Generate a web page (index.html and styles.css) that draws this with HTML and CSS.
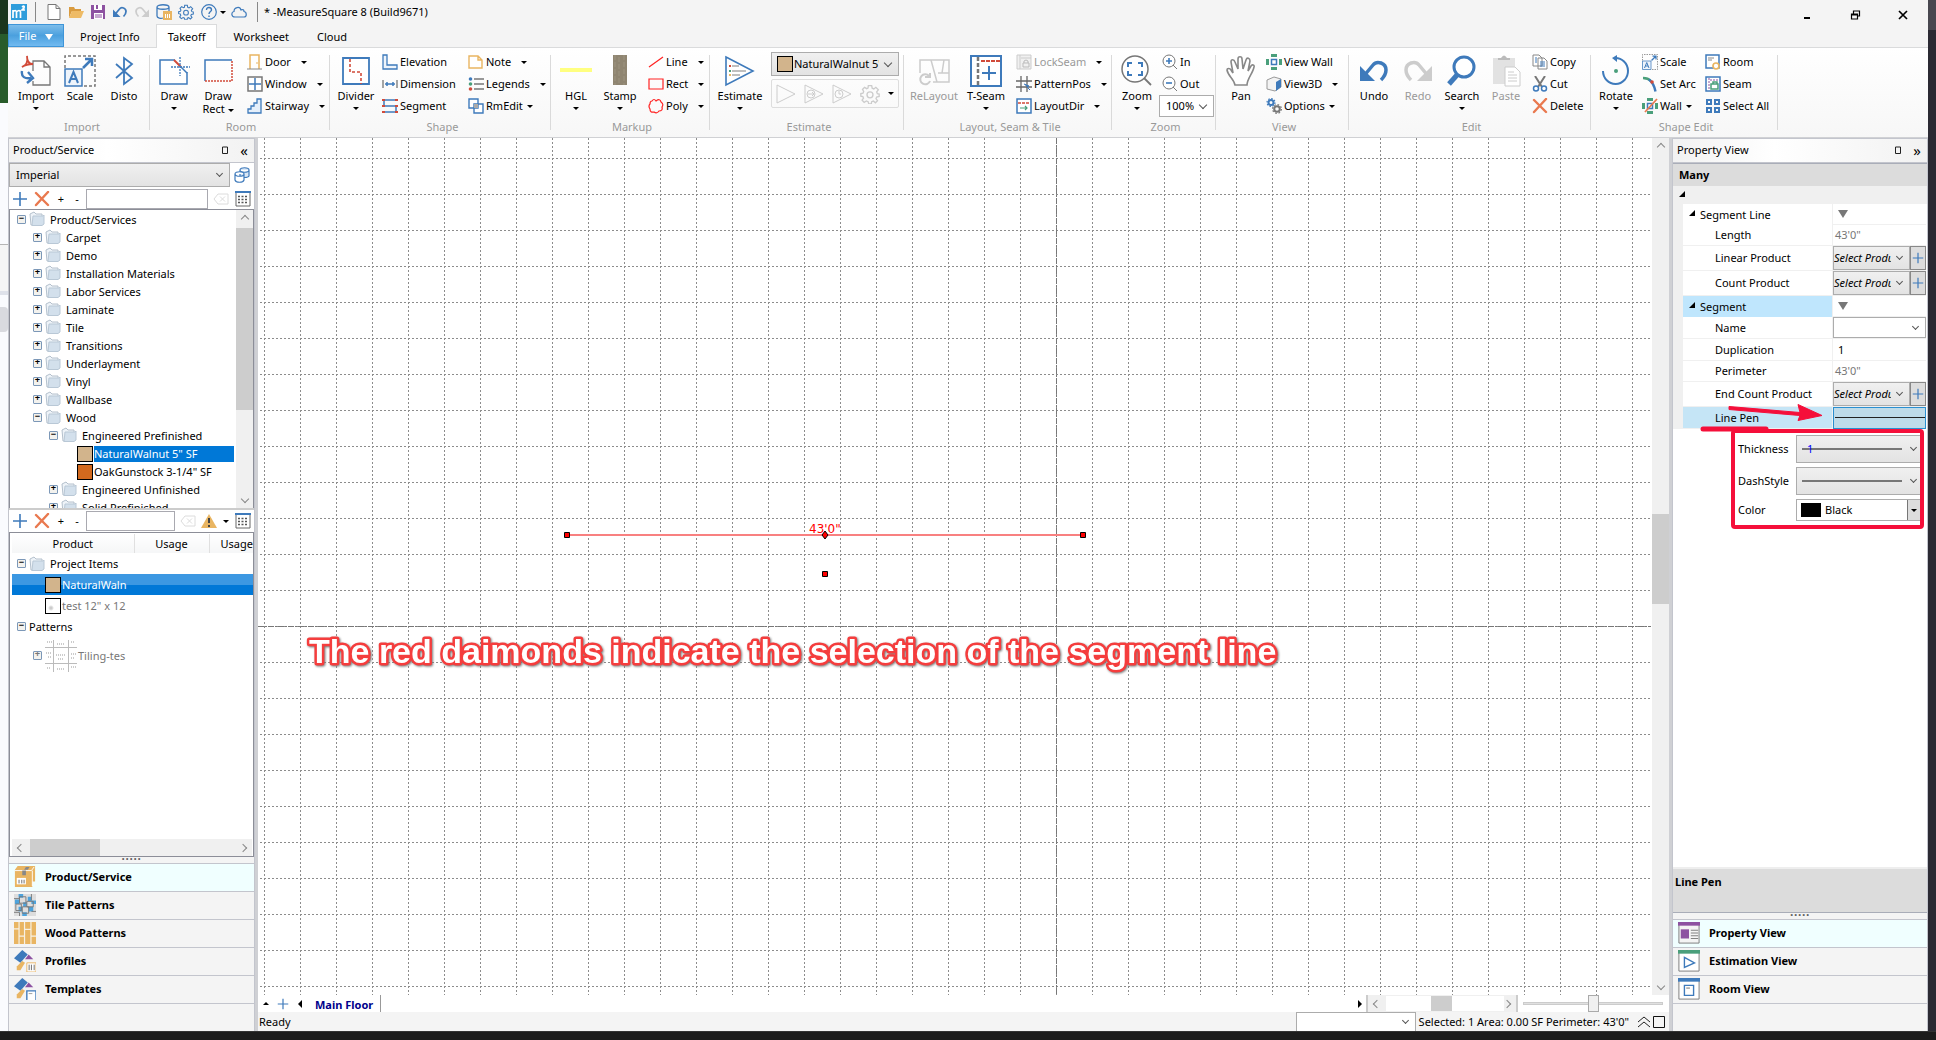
FILE: index.html
```html
<!DOCTYPE html>
<html lang="en">
<head>
  <meta charset="UTF-8">
  <title>MeasureSquare 8</title>
  <link rel="stylesheet" href="styles.css">
</head>
<body>

  <!-- shared icons -->
  <svg class="defs" aria-hidden="true">
    <symbol id="folder" viewBox="0 0 16 16">
      <path d="M1 3l4-2 2 2h6v11H2z" fill="#eef3f8" stroke="#b4c0cc"/>
      <path d="M4 5h10l1-1v9l-2 1.500H3z" fill="#d3e0ec" stroke="#b9c8d6"/>
    </symbol>
    <symbol id="plus" viewBox="0 0 16 16"><path d="M8 1v14M1 8h14" stroke="#3e7abb" stroke-width="1.600"/></symbol>
    <symbol id="cross" viewBox="0 0 16 16"><path d="M2 2l12 12M14 1L2 14" stroke="#e9794f" stroke-width="2.400" stroke-linecap="round"/></symbol>
    <symbol id="grid" viewBox="0 0 16 16">
      <path d="M1 1h14v14H1z" fill="#fff" stroke="#666"/><path d="M0 1h16" stroke="#3e7abb" stroke-width="2"/>
      <path d="M3 5.500h10M3 8.500h10M3 11.500h10" stroke="#555" stroke-width="1.500" stroke-dasharray="2 1.500"/>
    </symbol>
    <symbol id="clear" viewBox="0 0 16 16"><path d="M5 3h10v10H5L1 8zM7 5.500l5 5M12 5.500l-5 5" fill="none" stroke="#dcdcdc"/></symbol>
    <symbol id="scale" viewBox="0 0 32 32">
      <path d="M1 13V1h30v30H20" fill="none" stroke="#777" stroke-width="1.500" stroke-dasharray="3 2"/>
      <path d="M1 14h17v17H1z" fill="#eef4fb" stroke="#3e7abb" stroke-width="1.500"/>
      <path d="M5 28l4.500-11L14 28M7 24h5" fill="none" stroke="#3e7abb" stroke-width="2"/>
      <path d="M19 13l8-8M21 4h7v7" fill="none" stroke="#3e7abb" stroke-width="2.500"/>
    </symbol>
    <symbol id="undo" viewBox="0 0 32 32">
      <path d="M5 22L15 10c4-5 13-2 13 5 0 4-2 7-5 10" fill="none" stroke="currentColor" stroke-width="3.500"/>
      <path d="M2 11v15h15z" fill="currentColor"/>
    </symbol>
    <symbol id="gear" viewBox="0 0 24 24">
      <path d="M10 2h4l.6 3 2 .9L19 4l3 3-2 2.500.8 2L23 12v3l-3 .6-.8 1.900L21 20l-2.500 2.500L16 20.500l-2 .7L13.500 24h-3l-.8-2.800-2-.8L5 22l-2.500-2.500L4.200 17l-.8-2L1 14.500v-3L3.600 11l.8-2L3 6.500 5.500 4 8 5.600l1.600-.7z" fill="none" stroke="currentColor" stroke-width="1.600"/>
      <circle cx="12" cy="13" r="3.600" fill="none" stroke="currentColor" stroke-width="1.600"/>
    </symbol>
    <symbol id="wallview" viewBox="0 0 16 16">
      <path d="M5 0h6v3H5zM5 13h6v3H5zM0 5h3v6H0zM13 5h3v6h-3z" fill="#4a9f7b"/>
      <path d="M5.500 5.500h5v5h-5z" fill="#fff" stroke="#3e7abb" stroke-width="1.500"/>
    </symbol>
    <symbol id="stamps" viewBox="0 0 24 24">
      <path d="M9 0l6 5-8 9-7-5z" fill="#3e7abb"/><path d="M12 10l4-5 5 5z" fill="#8d52a1"/>
      <path d="M9 12l3 2-5 8H3l0-4z" fill="#e9b562"/>
    </symbol>
  </svg>

  <div class="behind"><i class="b1"></i><i class="b2"></i><i class="b3"></i><i class="b4"></i><i class="b5"></i></div>

  <div class="app">

    <header class="titlebar">
      <svg class="i16" viewBox="0 0 16 16"><path d="M0 0h16v16H0z" fill="#2f9ddb"/><path d="M2 14V6M2 8q2.500-3 3.500 0v6M5.500 8q3-3 4 0v6M11 3q3-2 2 1l-2 2h3" fill="none" stroke="#fff" stroke-width="1.700"/></svg>
      <span class="bar"></span>
      <svg class="i16" viewBox="0 0 16 16"><path d="M2 .5h8l4 4v11H2zM10 .5v4h4" fill="#fff" stroke="#777"/></svg>
      <svg class="i16" viewBox="0 0 16 16"><path d="M1 14V3h5l1 2h6v2H4z" fill="#d99b3f"/><path d="M1 14l3-7h12l-3 7z" fill="#eebb66"/></svg>
      <svg class="i16" viewBox="0 0 16 16"><path d="M1 1h14v14H1z" fill="#8d52a1"/><path d="M4 1h8v5H4zM4 9h9v6H4z" fill="#fff"/><path d="M6 1h2v4H6z" fill="#8d52a1"/><path d="M5 11h7M5 13h7" stroke="#8d52a1"/></svg>
      <svg class="i16 blue"><use href="#undo"/></svg>
      <svg class="i16 pale flip"><use href="#undo"/></svg>
      <svg class="i16" viewBox="0 0 16 16"><path d="M1 3v9c0 2 4 3 6 2M1 3c0-3 12-3 12 0v4M1 3c0 3 12 3 12 0" fill="none" stroke="#3e7abb" stroke-width="1.300"/><path d="M7 7h9v9H7z" fill="#e9b562"/><path d="M9.500 10v4M11.500 10v4M13.500 10v4" stroke="#fff"/></svg>
      <svg class="i16 blue"><use href="#gear"/></svg>
      <svg class="i16 help" viewBox="0 0 16 16"><circle cx="8" cy="8" r="7.300" fill="none" stroke="#3e7abb" stroke-width="1.200"/><path d="M5.500 6c0-3.500 5-3.300 5 0 0 1.500-2.500 1.800-2.500 4M8 11.500v1.500" fill="none" stroke="#3e7abb" stroke-width="1.400"/></svg>
      <i class="down"></i>
      <svg class="i16 cloud" viewBox="0 0 16 16"><path d="M4 13c-4 0-4-5-1-5.500C3 3 9 2 10 6c2-1 3 0 3 1.500 3 .5 3 5.500 0 5.500z" fill="none" stroke="#3e7abb" stroke-width="1.200"/></svg>
      <span class="bar"></span>
      <h1>* -MeasureSquare 8 (Build9671)</h1>
      <div class="winbtns">
        <button aria-label="Minimize"><svg class="i12" viewBox="0 0 12 12"><path d="M3 9h6" stroke="#000" stroke-width="2"/></svg></button>
        <button aria-label="Restore"><svg class="i12" viewBox="0 0 12 12"><path d="M2.500 5h6v5h-6zM4.500 5V2h6v5h-2M2.500 6h6" fill="none" stroke="#000" stroke-width="1.200"/></svg></button>
        <button aria-label="Close"><svg class="i12" viewBox="0 0 12 12"><path d="M2 2l8 8M10 2l-8 8" stroke="#000" stroke-width="1.700"/></svg></button>
      </div>
    </header>

    <nav class="tabs">
      <button class="file">File <i class="down white"></i></button>
      <button>Project Info</button>
      <button class="on">Takeoff</button>
      <button>Worksheet</button>
      <button>Cloud</button>
    </nav>

    <div class="ribbon">
      <section class="group g-import">
        <div class="tools">
          <button class="big"><svg viewBox="0 0 32 32"><path d="M13 16V6h11l6 6v18H13v-4M24 6v6h6" fill="none" stroke="#777" stroke-width="1.300"/><path d="M2 12c5-2 6-6 5-11 0 5 2 8 6 8-4 0-8 1-11 3z" fill="none" stroke="#d14b3a" stroke-width="1.800"/><path d="M2 16c-1 6 3 8 9 7M8 17l5 6-6 5" fill="none" stroke="#3e7abb" stroke-width="2.400"/></svg>Import<i class="down"></i></button>
          <button class="big"><svg><use href="#scale"/></svg>Scale</button>
          <button class="big"><svg viewBox="0 0 32 32"><path d="M8 9l16 14-8 6V3l8 6L8 23" fill="none" stroke="#3e7abb" stroke-width="1.800"/></svg>Disto</button>
        </div>
        <h2>Import</h2>
      </section>

      <section class="group g-room">
        <div class="tools">
          <button class="big"><svg viewBox="0 0 32 32"><path d="M17 5H2v24h27V17" fill="#fff" stroke="#3e7abb" stroke-width="1.500"/><path d="M16 5l7 7" stroke="#d14b3a" stroke-width="2"/><path d="M22 11l7 7" stroke="#3e7abb" stroke-width="1.500"/><path d="M22 2v19M13 12h19" stroke="#3e7abb" stroke-width="1.300" stroke-dasharray="2 1"/></svg>Draw<i class="down"></i></button>
          <button class="big"><svg viewBox="0 0 32 32"><path d="M3 26V5h27" fill="none" stroke="#3e7abb" stroke-width="1.500"/><path d="M30 6v20H3" fill="none" stroke="#d14b3a" stroke-width="1.500" stroke-dasharray="2 1"/></svg>Draw<span>Rect <i class="down"></i></span></button>
          <div class="col c7">
            <button class="sm"><svg viewBox="0 0 16 16"><path d="M3 15V1h9v14" fill="#fff" stroke="#e9b562" stroke-width="1.500"/><path d="M0 15h15" stroke="#888"/><path d="M10 8v2" stroke="#e9b562"/></svg>Door<i class="down"></i></button>
            <button class="sm"><svg viewBox="0 0 16 16"><path d="M1 1h14v14H1z" fill="#fff" stroke="#777" stroke-width="1.500"/><path d="M8 2v12M2 8h12" stroke="#3e7abb" stroke-width="1.500"/></svg>Window<i class="down"></i></button>
            <button class="sm"><svg viewBox="0 0 16 16"><path d="M1 15v-4h3V8h3V5h3V1h4v14z" fill="#e5effa" stroke="#3e7abb" stroke-width="1.300"/></svg>Stairway<i class="down"></i></button>
          </div>
        </div>
        <h2>Room</h2>
      </section>

      <section class="group g-shape">
        <div class="tools">
          <button class="big"><svg viewBox="0 0 32 32"><path d="M3 3h26v26H3z" fill="#fff" stroke="#3e7abb" stroke-width="1.800"/><path d="M10 4v13h11v12" fill="none" stroke="#d14b3a" stroke-width="1.600" stroke-dasharray="3 2"/></svg>Divider<i class="down"></i></button>
          <div class="col c4 c-el">
            <button class="sm"><svg viewBox="0 0 16 16"><path d="M1 1h4v10h10v4H1z" fill="#eef4fb" stroke="#3e7abb" stroke-width="1.300"/></svg>Elevation</button>
            <button class="sm"><svg viewBox="0 0 16 16"><path d="M1 4v8M15 4v8" stroke="#777" stroke-width="1.300"/><path d="M3 8h10M5 6v4M11 6v4" stroke="#3e7abb" stroke-width="1.500"/></svg>Dimension</button>
            <button class="sm"><svg viewBox="0 0 16 16"><path d="M1 2h14M1 14h14M2 2v6h12v6" fill="none" stroke="#3e7abb" stroke-width="1.500"/><path d="M0 2h3M13 2h3M0 8h3M13 8h3M0 14h3M13 14h3" stroke="#d14b3a" stroke-width="2"/></svg>Segment</button>
          </div>
          <div class="col">
            <button class="sm"><svg viewBox="0 0 16 16"><path d="M1 2h9l4 4v8H1zM10 2v4h4" fill="#fff" stroke="#e9b562" stroke-width="1.400"/></svg>Note<i class="down"></i></button>
            <button class="sm"><svg viewBox="0 0 16 16"><path d="M6 3h10M6 8h10M6 13h10" stroke="#777" stroke-width="1.500"/><circle cx="2.500" cy="3" r="1.800" fill="#3e7abb"/><circle cx="2.500" cy="8" r="1.800" fill="#4a9f7b"/><circle cx="2.500" cy="13" r="1.800" fill="#d14b3a"/></svg>Legends<i class="down"></i></button>
            <button class="sm tight"><svg viewBox="0 0 16 16"><path d="M1 1h9v9H1zM6 6h9v9H6z" fill="#fff" stroke="#3e7abb" stroke-width="1.400"/><path d="M6 6h4v4H6z" fill="#aaa"/></svg>RmEdit<i class="down"></i></button>
          </div>
        </div>
        <h2>Shape</h2>
      </section>

      <section class="group g-markup">
        <div class="tools">
          <button class="big"><svg viewBox="0 0 32 32"><path d="M0 15h32" stroke="#ffff80" stroke-width="4"/></svg>HGL<i class="down"></i></button>
          <button class="big"><svg viewBox="0 0 32 32"><path d="M9 0h14v30H9z" fill="#8f8571"/><path d="M11 0v30M15 2v26M20 0v30" stroke="#9d9481" stroke-dasharray="5 2"/></svg>Stamp<i class="down"></i></button>
          <div class="col c6">
            <button class="sm"><svg viewBox="0 0 16 16"><path d="M1 13L15 3" stroke="#f22" stroke-width="1.200"/></svg>Line<i class="down"></i></button>
            <button class="sm"><svg viewBox="0 0 16 16"><path d="M1 3h14v10H1z" fill="none" stroke="#f22" stroke-width="1.200"/></svg>Rect<i class="down"></i></button>
            <button class="sm"><svg viewBox="0 0 16 16"><path d="M4 3q2-3 4 0 4-3 5 1 3 2 1 5 1 4-3 4-2 3-5 1-4 1-4-3-2-3 0-5 0-3 2-3z" fill="none" stroke="#f22" stroke-width="1.200"/></svg>Poly<i class="down"></i></button>
          </div>
        </div>
        <h2>Markup</h2>
      </section>

      <section class="group g-estimate">
        <div class="tools">
          <button class="big wide"><svg viewBox="0 0 32 32"><path d="M2 2l27 14L2 30z" fill="#fff" stroke="#3e7abb" stroke-width="1.600"/><path d="M8 11h7M8 16h14M8 20h8" stroke="#aaa" stroke-width="1.500"/><path d="M5 11h2" stroke="#d14b3a" stroke-width="2"/><path d="M5 16h2" stroke="#4a9f7b" stroke-width="2"/><path d="M5 20h2" stroke="#e9b562" stroke-width="2"/></svg>Estimate<i class="down"></i></button>
          <div class="est">
            <button class="combo product"><span class="swatch tan"></span><span class="clip">NaturalWalnut 5" SF</span></button>
            <div class="runs">
              <svg viewBox="0 0 20 20"><path d="M1 1l18 9L1 19z"/></svg>
              <svg viewBox="0 0 20 20"><path d="M1 1l18 9L1 19z"/><circle cx="7" cy="10" r="4"/><path d="M4 10h6M8 8l2 2-2 2"/></svg>
              <svg viewBox="0 0 20 20"><path d="M1 1l18 9L1 19z"/><circle cx="7" cy="10" r="4"/><path d="M7 7v3h2"/></svg>
              <svg class="palest"><use href="#gear"/></svg>
              <i class="down"></i>
            </div>
          </div>
        </div>
        <h2>Estimate</h2>
      </section>

      <section class="group g-layout">
        <div class="tools">
          <button class="big wide off"><svg viewBox="0 0 32 32"><path d="M2 18V5h29v22H15M13 5l6 22M20 18h11M26 5l-2 13" fill="none" stroke="#ccc" stroke-width="1.500"/><path d="M11 21a5 5 0 1 0 1 5M7 22h5v-4" fill="none" stroke="#ccc" stroke-width="2"/></svg>ReLayout</button>
          <button class="big wide"><svg viewBox="0 0 32 32"><path d="M1 1h30v30H1z" fill="#fff" stroke="#3e7abb" stroke-width="2"/><path d="M8 2v28" stroke="#777" stroke-width="2.500" stroke-dasharray="4 2"/><path d="M11 6h19" stroke="#d14b3a" stroke-width="2" stroke-dasharray="4 1"/><path d="M19 11v14M12 18h14" stroke="#3e7abb" stroke-width="2"/></svg>T-Seam<i class="down"></i></button>
          <div class="col c4">
            <button class="sm off"><svg viewBox="0 0 16 16"><path d="M1 1h14v14H1zM4 1v14M5 4h10" fill="#f0f0f0" stroke="#ccc"/><path d="M7 9h6v4H7zM8 9V7q2-2 4 0v2" fill="none" stroke="#bbb"/></svg>LockSeam<i class="down"></i></button>
            <button class="sm"><svg viewBox="0 0 16 16"><path d="M5 0v16M11 0v16M0 5h16M0 11h16" stroke="#666" stroke-width="1.300"/><path d="M8 8l5 2-2 1 3 3" stroke="#3e7abb" fill="#3e7abb"/></svg>PatternPos<i class="down"></i></button>
            <button class="sm"><svg viewBox="0 0 16 16"><path d="M1 1h14v14H1z" fill="#fff" stroke="#3e7abb" stroke-width="1.500"/><path d="M2 5h12" stroke="#d14b3a" stroke-width="1.500" stroke-dasharray="3 1"/><path d="M4 10h7M9 8l2 2-2 2" fill="none" stroke="#4a9f7b" stroke-width="1.200"/></svg>LayoutDir<i class="down"></i></button>
          </div>
        </div>
        <h2>Layout, Seam &amp; Tile</h2>
      </section>

      <section class="group g-zoom">
        <div class="tools">
          <button class="big"><svg viewBox="0 0 32 32"><circle cx="14" cy="14" r="13" fill="#fff" stroke="#777" stroke-width="1.500"/><path d="M23 23l7 7" stroke="#777" stroke-width="1.800"/><path d="M7 12V8h4M17 8h4v4M21 16v4h-4M11 20H7v-4" fill="none" stroke="#3e7abb" stroke-width="2"/></svg>Zoom<i class="down"></i></button>
          <div class="col">
            <button class="sm in3"><svg viewBox="0 0 16 16"><circle cx="7" cy="7" r="6" fill="#fff" stroke="#777"/><path d="M11 11l4 4" stroke="#777"/><path d="M7 4v6M4 7h6" stroke="#3e7abb" stroke-width="1.600"/></svg>In</button>
            <button class="sm in3"><svg viewBox="0 0 16 16"><circle cx="7" cy="7" r="6" fill="#fff" stroke="#777"/><path d="M11 11l4 4" stroke="#777"/><path d="M4 7h6" stroke="#3e7abb" stroke-width="1.600"/></svg>Out</button>
            <span class="combo plain zoomsel"><select aria-label="Zoom level"><option>100%</option></select></span>
          </div>
        </div>
        <h2>Zoom</h2>
      </section>

      <section class="group g-view">
        <div class="tools">
          <button class="big"><svg viewBox="0 0 32 32"><path d="M10 30c-1-6-7-9-8-15 0-2 3-2 4 0l2 3L6 7c0-3 3-3 4 0l3 7V4c0-3 4-3 4 0l1 10 3-9c1-3 4-2 4 1l-2 10 3-5c1-2 4-1 3 1-1 6-7 12-7 18z" fill="#fff" stroke="#888" stroke-width="1.600"/></svg>Pan</button>
          <div class="col c3">
            <button class="sm"><svg><use href="#wallview"/></svg>View Wall</button>
            <button class="sm"><svg viewBox="0 0 16 16"><path d="M1 4l7-3 7 2v8l-6 4-8-2z" fill="#f3f3f3" stroke="#999"/><path d="M10 6l5-3v8l-5 4z" fill="#3e7abb"/></svg>View3D<i class="down"></i></button>
            <button class="sm tight"><svg viewBox="0 0 16 16"><circle cx="5" cy="4.500" r="2.500" fill="none" stroke="#3e7abb" stroke-width="2"/><circle cx="5" cy="4.500" r="4" fill="none" stroke="#3e7abb" stroke-width="1.200" stroke-dasharray="1.500 1.600"/><circle cx="11" cy="11" r="2.800" fill="none" stroke="#777" stroke-width="2"/><circle cx="11" cy="11" r="4.400" fill="none" stroke="#777" stroke-width="1.200" stroke-dasharray="1.700 1.750"/></svg>Options<i class="down"></i></button>
          </div>
        </div>
        <h2>View</h2>
      </section>

      <section class="group g-edit">
        <div class="tools">
          <button class="big blue"><svg><use href="#undo"/></svg><b>Undo</b></button>
          <button class="big pale"><svg class="flip"><use href="#undo"/></svg><b class="off">Redo</b></button>
          <button class="big"><svg viewBox="0 0 32 32"><circle cx="18" cy="12" r="10" fill="#fff" stroke="#3e7abb" stroke-width="3"/><path d="M11 20l-8 9" stroke="#3e7abb" stroke-width="5"/></svg>Search<i class="down"></i></button>
          <button class="big off"><svg viewBox="0 0 32 32"><path d="M3 3h22v26H3z" fill="#e2e2e2"/><path d="M8 5V3h3q3-5 6 0h3v2z" fill="#bbb"/><path d="M15 12h10l5 5v14H15z" fill="#fff" stroke="#ccc"/><path d="M18 17h6M18 20h9M18 23h9M18 26h9" stroke="#ccc"/></svg>Paste</button>
          <div class="col c4">
            <button class="sm"><svg viewBox="0 0 16 16"><path d="M1 1h6l3 3v8H1zM6 4h6l3 3v8H6z" fill="#fff" stroke="#888"/><path d="M8 8h5M8 10h5M8 12h5M3 4h2M3 6h2M3 8h2" stroke="#3e7abb"/></svg>Copy</button>
            <button class="sm"><svg viewBox="0 0 16 16"><path d="M3 0l7 11M13 0L6 11" stroke="#777" stroke-width="2"/><circle cx="4" cy="12.500" r="2.500" fill="none" stroke="#3e7abb" stroke-width="1.500"/><circle cx="12" cy="12.500" r="2.500" fill="none" stroke="#3e7abb" stroke-width="1.500"/></svg>Cut</button>
            <button class="sm"><svg><use href="#cross"/></svg>Delete</button>
          </div>
        </div>
        <h2>Edit</h2>
      </section>

      <section class="group g-shapeedit">
        <div class="tools">
          <button class="big"><svg viewBox="0 0 32 32"><path d="M3 16a12.500 13 0 1 0 12-13" fill="none" stroke="#3e7abb" stroke-width="2"/><path d="M17 0v7l-5-4z" fill="#3e7abb"/><circle cx="16" cy="16" r="2" fill="#4a9f7b"/></svg>Rotate<i class="down"></i></button>
          <div class="col c4 c-sc">
            <button class="sm"><svg><use href="#scale"/></svg>Scale</button>
            <button class="sm"><svg viewBox="0 0 16 16"><path d="M1 2q5 0 8 3" fill="none" stroke="#4a9f7b" stroke-width="2.400"/><path d="M7 3.500q5 4 6.500 12" fill="none" stroke="#3e7abb" stroke-width="2.400"/><circle cx="10" cy="6" r="1.800" fill="#d14b3a"/></svg>Set Arc</button>
            <button class="sm tight"><svg viewBox="0 0 16 16"><use href="#wallview" width="16" height="16"/><path d="M3 14L15 1" stroke="#e9794f" stroke-width="1.800"/></svg>Wall<i class="down"></i></button>
          </div>
          <div class="col">
            <button class="sm"><svg viewBox="0 0 16 16"><path d="M1 1h13v13H1z" fill="#fff" stroke="#3e7abb" stroke-width="1.500"/><path d="M3 4h6M3 6h4" stroke="#888"/><circle cx="11" cy="12" r="3" fill="#fff" stroke="#e9b562" stroke-width="1.700"/></svg>Room</button>
            <button class="sm"><svg viewBox="0 0 16 16"><path d="M1 1h14v14H1z" fill="#fff" stroke="#3e7abb" stroke-width="1.500"/><path d="M4 2v12M5 4h9" stroke="#8d52a1" stroke-dasharray="2 1"/><path d="M6 8h7v5H6zM8 8V6h4v2" fill="none" stroke="#4a9f7b" stroke-width="1.500"/></svg>Seam</button>
            <button class="sm"><svg viewBox="0 0 16 16"><path d="M2 2h4v4H2zM10 2h4v4h-4zM2 10h4v4H2zM10 10h4v4h-4z" fill="none" stroke="#3e7abb" stroke-width="2"/></svg>Select All</button>
          </div>
        </div>
        <h2>Shape Edit</h2>
      </section>
    </div>

    <main>
      <aside class="left">
        <div class="panelhead">Product/Service <svg class="i12" viewBox="0 0 12 12"><path d="M3.500 3h5v6.500h-5z" fill="none" stroke="#222"/></svg><span class="chev">«</span></div>
        <div class="unitrow">
          <span class="combo units"><select aria-label="Units"><option>Imperial</option></select></span>
          <svg class="i16" viewBox="0 0 16 16"><path d="M6 3v6c1 2 8 2 9 0V3M6 3c0-3 9-3 9 0s-9 3-9 0" fill="#dbe8f6" stroke="#3e7abb" stroke-width="1.200"/><path d="M1 7v6c1 3 8 3 9 0V7M1 7c0-3 9-3 9 0s-9 3-9 0" fill="#fff" stroke="#3e7abb" stroke-width="1.200"/></svg>
        </div>
        <div class="toolrow">
          <svg class="i16"><use href="#plus"/></svg>
          <svg class="i16 x"><use href="#cross"/></svg>
          <span class="pm">+</span><span class="pm">-</span>
          <input type="text" aria-label="Filter products">
          <svg class="i16"><use href="#clear"/></svg>
          <svg class="i16 last"><use href="#grid"/></svg>
        </div>
        <div class="treebox">
          <ul class="tree">
            <li><span class="exp">−</span><svg><use href="#folder"/></svg>Product/Services
              <ul>
                <li><span class="exp">+</span><svg><use href="#folder"/></svg>Carpet</li>
                <li><span class="exp">+</span><svg><use href="#folder"/></svg>Demo</li>
                <li><span class="exp">+</span><svg><use href="#folder"/></svg>Installation Materials</li>
                <li><span class="exp">+</span><svg><use href="#folder"/></svg>Labor Services</li>
                <li><span class="exp">+</span><svg><use href="#folder"/></svg>Laminate</li>
                <li><span class="exp">+</span><svg><use href="#folder"/></svg>Tile</li>
                <li><span class="exp">+</span><svg><use href="#folder"/></svg>Transitions</li>
                <li><span class="exp">+</span><svg><use href="#folder"/></svg>Underlayment</li>
                <li><span class="exp">+</span><svg><use href="#folder"/></svg>Vinyl</li>
                <li><span class="exp">+</span><svg><use href="#folder"/></svg>Wallbase</li>
                <li><span class="exp">−</span><svg><use href="#folder"/></svg>Wood
                  <ul>
                    <li><span class="exp">−</span><svg><use href="#folder"/></svg>Engineered Prefinished
                      <ul class="leaf">
                        <li class="row"><span class="swatch tan"></span><span class="sel">NaturalWalnut 5" SF</span></li>
                        <li class="row"><span class="swatch oak"></span>OakGunstock 3-1/4" SF</li>
                      </ul>
                    </li>
                    <li><span class="exp">+</span><svg><use href="#folder"/></svg>Engineered Unfinished</li>
                    <li><span class="exp">+</span><svg><use href="#folder"/></svg>Solid Prefinished</li>
                  </ul>
                </li>
              </ul>
            </li>
          </ul>
          <div class="vbar"><i class="arr up"></i><span class="thumb treethumb"></span><i class="arr dn"></i></div>
        </div>
        <div class="toolrow second">
          <svg class="i16"><use href="#plus"/></svg>
          <svg class="i16 x"><use href="#cross"/></svg>
          <span class="pm">+</span><span class="pm">-</span>
          <input type="text" aria-label="Filter project items">
          <svg class="i16"><use href="#clear"/></svg>
          <svg class="i16" viewBox="0 0 16 16"><path d="M8 1l8 14H0z" fill="#e9b562"/><path d="M8 5v5M8 12v2" stroke="#444" stroke-width="2"/></svg>
          <i class="down"></i>
          <svg class="i16 last"><use href="#grid"/></svg>
        </div>
        <div class="itembox">
          <table>
            <thead><tr><th class="c1">Product</th><th class="c2">Usage</th><th>Usage</th></tr></thead>
            <tbody>
              <tr><td colspan="3"><div class="cell"><span class="exp">−</span><svg><use href="#folder"/></svg>Project Items</div></td></tr>
              <tr class="picked"><td colspan="3"><div class="cell d2"><span class="swatch tan"></span>NaturalWaln</div></td></tr>
              <tr class="dim"><td colspan="3"><div class="cell d2"><span class="swatch speck"></span>test 12" x 12</div></td></tr>
              <tr><td colspan="3"><div class="cell bare"><span class="exp">−</span>Patterns</div></td></tr>
              <tr class="dim tall"><td colspan="3"><div class="cell d1"><span class="exp">+</span><svg class="tiling" viewBox="0 0 32 32"><path d="M0 7.500h32M0 23.500h32M8.500 0v32M23.500 0v32" stroke="#bbb"/><path d="M2 2h5M12 4h8M26 2h4M1 13h6M11 15h9M26 14h5M2 28h4M12 29h7M26 27h5M3 17h4M13 19h6M26 18h4" stroke="#ccc" stroke-width="2" stroke-dasharray="1 1"/></svg>Tiling-tes</div></td></tr>
            </tbody>
          </table>
          <div class="hbar"><i class="arr lf"></i><span class="thumb itemthumb"></span><i class="arr rt"></i></div>
        </div>
        <div class="grip">·····</div>
        <nav class="stack">
          <a href="#" class="on"><svg viewBox="0 0 24 24"><path d="M4 0h19v17h-3v6H1V4z" fill="#e9b562"/><path d="M1 5h18l3-4M20 5v17" fill="none" stroke="#fff"/><path d="M9 5h4v5H9zM13 1h4l-2 3h-4z" fill="#888"/><path d="M3 13h10v7H3z" fill="#fff"/><path d="M5.500 15v4M8.500 15v4M11 15v4" stroke="#666"/></svg>Product/Service</a>
          <a href="#"><svg viewBox="0 0 24 24"><path d="M0 0h24v24H0z" fill="#ddd"/><path d="M5 0h5v4H5zM15 3h4v5h-4zM1 6h5v5H1zM10 9h4v5h-4zM19 7h5v4h-5zM5 14h4v5H5zM16 14h5v5h-5zM9 20h5v4H9z" fill="#4da3dc"/><path d="M6 3h7v7H6zM14 8h7v6h-7zM9 14h7v7H9zM2 11h6v7H2zM19 0v7M0 5h6M0 20h6v4M19 19h5" fill="none" stroke="#777"/></svg>Tile Patterns</a>
          <a href="#"><svg viewBox="0 0 24 24"><path d="M0 0h24v24H0z" fill="#e9b562"/><path d="M5.500 0v24M11.500 0v24M18.500 0v24M0 7.500h5M12 8h6M6 15.500h5M19 15.500h5" stroke="#f7f1e4" stroke-width="1.300"/></svg>Wood Patterns</a>
          <a href="#"><svg viewBox="0 0 24 24"><use href="#stamps" width="24" height="24"/><path d="M14 14h10v10H14z" fill="#fff" stroke="#e9b562"/><path d="M16.500 16v6M19 16v6M22 16v6" stroke="#666"/></svg>Profiles</a>
          <a href="#"><svg viewBox="0 0 24 24"><use href="#stamps" width="24" height="24"/><path d="M14 24V14h10v10" fill="#fff" stroke="#3e7abb" stroke-width="1.500"/><path d="M16 17h4" stroke="#999"/></svg>Templates</a>
        </nav>
      </aside>

      <section class="center">
        <div class="work">
          <svg class="canvas">
            <defs>
              <pattern id="dots" x="6" y="20" width="36" height="36" patternUnits="userSpaceOnUse">
                <path d="M.5 0v36M0 .5h36" stroke="#8c8c8c" stroke-dasharray="2 2"/>
              </pattern>
            </defs>
            <rect width="100%" height="100%" fill="url(#dots)"/>
            <path d="M798.500 0v856M0 488.500h1393" stroke="#777" stroke-dasharray="6 1 2 1"/>
            <path d="M309 397h516" stroke="#f88080" stroke-width="2"/>
            <text class="dim" x="551" y="395">43'0"</text>
            <g fill="#f00" stroke="#000">
              <path d="M306.500 394.500h5v5h-5zM822.500 394.500h5v5h-5zM564.500 433.500h5v5h-5zM567 393l3 4-3 4-3-4z"/>
            </g>
            <text class="callout" x="51" y="525">The red daimonds indicate the selection of the segment line</text>
          </svg>
          <div class="vbar tallbar"><i class="arr up"></i><span class="thumb canvasthumb"></span><i class="arr dn"></i></div>
        </div>
        <div class="floors">
          <i class="upt"></i>
          <svg class="i12"><use href="#plus"/></svg>
          <i class="leftt"></i>
          <button class="floor">Main Floor</button>
          <i class="rightt"></i>
          <div class="hbar floorbar"><i class="arr lf"></i><span class="track"><span class="thumb"></span></span><i class="arr rt"></i></div>
          <input type="range" aria-label="Zoom" min="0" max="100" value="50">
        </div>
        <footer>
          <span>Ready</span>
          <span class="combo plain layer"><select aria-label="Layer"><option></option></select></span>
          <span class="sum">Selected: 1 Area: 0.00 SF Perimeter: 43'0"</span>
          <svg class="i12" viewBox="0 0 12 12"><path d="M0 6l6-5 6 5M0 11l6-5 6 5" fill="none" stroke="#222"/></svg>
          <svg class="i12" viewBox="0 0 12 12"><path d="M.5 .5h11v11H.5z" fill="none" stroke="#111"/></svg>
        </footer>
      </section>

      <aside class="right">
        <div class="panelhead">Property View <svg class="i12" viewBox="0 0 12 12"><path d="M3.500 3h5v6.500h-5z" fill="none" stroke="#222"/></svg><span class="chev">»</span></div>
        <div class="props">
          <h3>Many</h3>
          <div class="root"><i class="tri"></i></div>
          <div class="rows">
            <div class="prow head"><span><i class="tri"></i>Segment Line</span><div><i class="filter"></i></div></div>
            <div class="prow"><span>Length</span><div class="ro">43'0"</div></div>
            <div class="prow pick"><label for="lp">Linear Product</label><div><span class="combo"><select id="lp"><option>Select Product</option></select></span><button class="add" aria-label="Add linear product"><svg class="i12"><use href="#plus"/></svg></button></div></div>
            <div class="prow pick"><label for="cp">Count Product</label><div><span class="combo"><select id="cp"><option>Select Product</option></select></span><button class="add" aria-label="Add count product"><svg class="i12"><use href="#plus"/></svg></button></div></div>
            <div class="prow head hot"><span><i class="tri"></i>Segment</span><div><i class="filter"></i></div></div>
            <div class="prow mid"><label for="nm">Name</label><div><span class="combo plain"><select id="nm"><option></option></select></span></div></div>
            <div class="prow mid"><label for="dup">Duplication</label><div><input id="dup" type="text" value="1"></div></div>
            <div class="prow"><span>Perimeter</span><div class="ro">43'0"</div></div>
            <div class="prow pick"><label for="ec">End Count Product</label><div><span class="combo"><select id="ec"><option>Select Product</option></select></span><button class="add" aria-label="Add end count product"><svg class="i12"><use href="#plus"/></svg></button></div></div>
            <div class="prow mid pen"><span>Line Pen</span><div class="penbox"><i></i></div></div>

            <div class="popup">
              <label for="th">Thickness</label><button id="th" class="combo line"><i></i><em>1</em></button>
              <label for="ds">DashStyle</label><button id="ds" class="combo line"><i></i></button>
              <label for="co">Color</label><button id="co" class="combo color"><b class="black"></b>Black<span><i class="down"></i></span></button>
            </div>
            <svg class="marks" viewBox="0 0 130 36"><path d="M3 28h63" stroke="#f50f3a" stroke-width="5" stroke-linecap="round"/><path d="M29 5.500l71 6-2-8 24 11-24 5 2-5-71-6z" fill="#f50f3a" stroke="#f50f3a"/></svg>
          </div>
          <div class="desc">Line Pen</div>
        </div>
        <div class="grip">·····</div>
        <nav class="stack">
          <a href="#" class="on"><svg viewBox="0 0 24 24"><path d="M1 1h22v22H1z" fill="#f4f4f4" stroke="#777"/><path d="M0 0h24v4H0z" fill="#8d52a1"/><path d="M3 8h9v10H3z" fill="#8d52a1"/><path d="M14 9h8M14 12h8M14 15h8M14 18h8" stroke="#777"/></svg>Property View</a>
          <a href="#"><svg viewBox="0 0 24 24"><path d="M1 1h22v22H1z" fill="#fff" stroke="#777"/><path d="M0 0h24v4H0z" fill="#4a9f7b"/><path d="M7 8l11 6-11 5z" fill="none" stroke="#3e7abb" stroke-width="1.500"/></svg>Estimation View</a>
          <a href="#"><svg viewBox="0 0 24 24"><path d="M1 1h22v22H1z" fill="#fff" stroke="#777"/><path d="M0 0h24v4H0z" fill="#3e7abb"/><path d="M7 8h10v11H7z" fill="none" stroke="#3e7abb" stroke-width="1.500"/><path d="M9 11h4" stroke="#999" stroke-width="1.500"/></svg>Room View</a>
        </nav>
      </aside>
    </main>
  </div>

</body>
</html>
```
FILE: styles.css
```css
* {
  box-sizing: border-box;
}

body {
  margin: 0;
  height: 100vh;
  padding: 0 8px 8px;
  display: flex;
  position: relative;
  overflow: hidden;
  background: linear-gradient(#48474f 30px, #2b2a33 30px);
  font-family: "Noto Sans", "Open Sans", sans-serif;
  font-size: 11px;
  line-height: 14px;
  color: #000;
}

body::after {
  content: "";
  position: absolute;
  left: 0;
  right: 0;
  bottom: 0;
  height: 8px;
  background: #1c1c1c;
  border-top: 1px solid #333;
}

button, input, select {
  font: inherit;
  color: inherit;
  margin: 0;
}

button {
  border: 0;
  padding: 0;
  background: none;
}

h1, h2, h3, ul {
  margin: 0;
  padding: 0;
  font: inherit;
  list-style: none;
}

.defs {
  position: absolute;
  width: 0;
  height: 0;
}

.i16 { width: 16px; height: 16px; flex: none; }
.i12 { width: 12px; height: 12px; flex: none; }
.blue { color: #3e7abb; }
.pale { color: #ccc; }
.flip { transform: scaleX(-1); }

/* window that shows behind on the left */
.behind {
  position: absolute;
  left: 0;
  top: 0;
  bottom: 0;
  width: 8px;
  display: flex;
  flex-direction: column;
  background: #fafbfe;
}

.b1 { height: 34px; background: #1b361d; }
.b2 { height: 69px; background: #285c2b; }
.b3 { height: 142px; border-bottom: 1px solid #b5b5b5; }
.b4 { height: 50px; background: #f5f5f5; border-bottom: 4px solid #dfe2ea; }
.b5 { height: 25px; margin-top: 12px; background: #d9dadf; border-radius: 0 4px 4px 0; }

.app {
  flex: 1;
  min-width: 0;
  position: relative;
  display: flex;
  flex-direction: column;
  background: #f4f4f4;
}

.down {
  display: inline-block;
  border: 3px solid transparent;
  border-top-color: #000;
  border-bottom: 0;
}

.down.white {
  border-width: 6px 4px 0;
  border-top-color: #fff;
  margin-left: 6px;
}

/* title bar and tabs */
.titlebar {
  height: 24px;
  display: flex;
  align-items: center;
  gap: 6px;
  padding-left: 3px;
}

.titlebar .bar {
  width: 1px;
  height: 20px;
  margin: 0 4px 0 2px;
  background: #888;
}

.titlebar .help { margin-left: 1px; }
.titlebar .down { margin: 0 -1px 0 -3px; }
.titlebar .cloud + .bar { margin: 0 0 0 4px; }

.winbtns {
  margin-left: auto;
  display: flex;
  gap: 36px;
  padding: 6px 19px 0 0;
}

.winbtns button { height: 12px; }

.tabs {
  height: 24px;
  display: flex;
  gap: 4px;
  border-bottom: 1px solid #dadbdc;
}

.tabs button {
  height: 24px;
  padding: 0 11px;
  border: 1px solid transparent;
  border-bottom: 0;
}

.tabs .on {
  background: #fff;
  border-color: #dadbdc;
}

.tabs .file {
  width: 56px;
  height: 23px;
  padding: 0;
  color: #fff;
  border: 1px solid #3e95d8;
  background: linear-gradient(#7dbdea, #4ba0de 50%, #72baf0);
}

/* ribbon */
.ribbon {
  height: 90px;
  display: flex;
  padding-top: 7px;
  background: linear-gradient(#fff, #f7f7f7);
  border-bottom: 1px solid #d0d1d4;
}

.group {
  height: 80px;
  flex: none;
  background: linear-gradient(#dadada, #dadada) no-repeat right top / 1px 75px;
}

.g-import { width: 142px; padding-left: 6px; }
.g-room { width: 180px; padding-left: 2px; }
.g-shape { width: 221px; padding-left: 4px; }
.g-markup { width: 159px; padding-left: 3px; }
.g-estimate { width: 194px; padding-left: 4px; }
.g-layout { width: 208px; padding-left: 4px; }
.g-zoom { width: 104px; padding-left: 3px; }
.g-view { width: 133px; padding-left: 3px; }
.g-edit { width: 242px; padding-left: 3px; }
.g-shapeedit { width: 187px; padding-left: 3px; }

.group h2 {
  text-align: center;
  color: #999;
}

.tools {
  height: 65px;
  display: flex;
}

.big {
  width: 44px;
  display: flex;
  flex-direction: column;
  align-items: center;
  line-height: 13px;
  white-space: nowrap;
}

.big.wide { width: 52px; }

.big > svg {
  width: 32px;
  height: 32px;
  flex: none;
  margin-bottom: 2px;
}

.big > .down { margin-top: 5px; }
.big span .down { vertical-align: middle; }

.big b {
  font-weight: normal;
  color: #000;
}

.off, .big b.off { color: #999; }

.col {
  display: flex;
  flex-direction: column;
  align-items: flex-start;
  margin-top: -4px;
}

.c3 { margin-left: 3px; }
.c4 { margin-left: 4px; }
.c6 { margin-left: 6px; }
.c7 { margin-left: 7px; }
.c-el { width: 86px; }
.c-sc { width: 63px; }

.sm {
  height: 22px;
  display: flex;
  align-items: center;
  white-space: nowrap;
}

.sm svg {
  width: 16px;
  height: 16px;
  margin-right: 2px;
}

.sm .down { margin-left: 10px; }
.sm.tight .down { margin-left: 4px; }
.in3 { margin-left: 3px; }

/* drop-downs */
.combo {
  position: relative;
  display: flex;
  align-items: center;
  border: 1px solid #acacac;
  background: linear-gradient(#f0f0f0, #e3e3e3);
}

.combo::after {
  content: "";
  position: absolute;
  right: 7px;
  top: 50%;
  width: 5px;
  height: 5px;
  margin-top: -4px;
  border: solid #555;
  border-width: 0 1px 1px 0;
  transform: rotate(45deg);
}

.combo.plain { background: #fff; }

.combo select {
  appearance: none;
  width: 100%;
  height: 100%;
  padding: 0 0 0 6px;
  border: 0;
  background: none;
}

.zoomsel { width: 55px; height: 22px; }

.est {
  width: 128px;
  margin: -3px 0 0 5px;
}

.product {
  width: 100%;
  height: 24px;
  padding: 0 19px 0 5px;
}

.clip {
  flex: 1;
  overflow: hidden;
  white-space: nowrap;
  text-align: left;
}

.runs {
  height: 29px;
  margin-top: 3px;
  padding: 0 4px;
  display: flex;
  align-items: center;
  justify-content: space-between;
  border: 1px solid #ddd;
  border-radius: 2px;
}

.runs svg {
  width: 20px;
  height: 20px;
  fill: none;
  stroke: #ccc;
}

.palest { color: #ccc; }

.swatch {
  width: 16px;
  height: 16px;
  flex: none;
  margin-right: 1px;
  border: 1px solid #000;
}

.tan { background: #d2b48c; }
.oak { background: #d2691e; }
.speck { background: radial-gradient(circle at 5px 9px, #ccc 1px, #fff 3px); }

/* panels */
main {
  flex: 1;
  min-height: 0;
  display: flex;
}

.left, .right {
  flex: none;
  display: flex;
  flex-direction: column;
  background: #f4f4f4;
  border: 1px solid #c3c5cd;
}

.left { width: 247px; }
.right { width: 256px; }

.panelhead {
  height: 24px;
  display: flex;
  align-items: center;
  padding: 0 6px 2px 4px;
  background: linear-gradient(90deg, #f2f2f2, #fff 40%, #f2f2f2);
  border-bottom: 1px solid #c3c5cd;
}

.panelhead svg { margin-left: auto; }

.chev {
  margin-left: 9px;
  font-size: 15px;
}

.unitrow {
  height: 25px;
  display: flex;
  justify-content: space-between;
  padding: 0 4px 1px 0;
  align-items: center;
  background: #fff;
}

.units {
  width: 221px;
  height: 24px;
}

.units::after, .layer::after, .prow .combo::after, .popup .combo::after {
  width: 4px;
  height: 4px;
}

.toolrow {
  height: 21px;
  display: flex;
  align-items: center;
  padding: 0 3px;
  background: #fff;
}

.toolrow.second { height: 24px; border-top: 2px solid #ccc; }
.toolrow .x { margin-left: 6px; }

.pm {
  width: 16px;
  text-align: center;
}

.x + .pm { margin-left: 3px; }

.toolrow input {
  flex: 1;
  min-width: 0;
  height: 20px;
  margin: 0 5px 0 1px;
  border: 1px solid #a9a9b0;
  background: #fff;
}

.toolrow .last { margin-left: 6px; }
.second .i16 + .i16:not(.x) { margin-left: 5px; }
.second .down { margin: 0 0 0 6px; }

.treebox {
  flex: none;
  height: 299px;
  display: flex;
  overflow: hidden;
  background: #fff;
  border: 1px solid #8c8e98;
  border-bottom: 0;
}

.tree {
  flex: 1;
  min-width: 0;
  padding: 1px 0 0 7px;
  overflow: hidden;
}

.tree ul { padding-left: 16px; }

.tree li {
  line-height: 18px;
  white-space: nowrap;
}

.tree svg, .cell svg {
  width: 16px;
  height: 16px;
  margin: 0 5px 0 3px;
  vertical-align: -3px;
}

.exp {
  display: inline-block;
  width: 9px;
  height: 9px;
  flex: none;
  overflow: hidden;
  vertical-align: 0;
  font: bold 9px/7px "Liberation Mono", monospace;
  text-align: center;
  border: 1px solid #7c98b8;
  border-radius: 1px;
  background: #f3f2ee;
}

.tree .leaf { padding-left: 28px; }

.tree .row {
  height: 18px;
  display: flex;
  align-items: center;
}

.sel {
  flex: 1;
  line-height: 16px;
  margin-right: 2px;
  color: #fff;
  background: #0078d7;
}

/* scroll bars */
.vbar {
  width: 17px;
  flex: none;
  display: flex;
  flex-direction: column;
  align-items: center;
  background: #f0f0f0;
}

.hbar {
  height: 17px;
  display: flex;
  align-items: center;
  background: #f0f0f0;
}

.arr {
  flex: none;
  width: 6px;
  height: 6px;
  margin: 6px;
  border: solid #888;
  border-width: 1px 0 0 1px;
}

.up { transform: rotate(45deg); }
.dn { transform: rotate(225deg); margin-top: auto; }
.lf { transform: rotate(-45deg); }
.rt { transform: rotate(135deg); margin-left: auto; }

.thumb { background: #cdcdcd; }
.treethumb { width: 17px; height: 182px; }
.itemthumb { width: 70px; height: 17px; }
.canvasthumb { width: 17px; height: 90px; margin-top: 358px; }

.itembox {
  flex: 1;
  min-height: 0;
  display: flex;
  flex-direction: column;
  overflow: hidden;
  padding: 1px 1px 0 2px;
  background: #fff;
  border: 1px solid #8c8e98;
}

.itembox table {
  width: 253px;
  table-layout: fixed;
  border-collapse: collapse;
  margin-bottom: auto;
}

.itembox th {
  height: 19px;
  padding: 0;
  font-weight: normal;
  border-right: 1px solid #e0e0e0;
  background: linear-gradient(#fff, #f5f6f7);
}

.itembox .c1 { width: 122px; }
.itembox .c2 { width: 75px; }

.itembox td {
  height: 21px;
  padding: 0;
}

.itembox .tall td { height: 37px; }

.cell {
  display: flex;
  align-items: center;
  padding-left: 5px;
}

.cell.d1 { padding-left: 21px; }
.cell.d2 { padding-left: 33px; }
.cell.bare { gap: 3px; }

.cell .tiling {
  width: 32px;
  height: 32px;
  margin-right: 1px;
}

.dim { color: #777; }

.picked {
  color: #fff;
  background: linear-gradient(#3c98e2 50%, #0078d7 50%);
}

.grip {
  height: 6px;
  flex: none;
  text-align: center;
  font: bold 12px/5px "Liberation Sans", sans-serif;
  color: #666;
}

.stack {
  flex: none;
  border-top: 1px solid #c3c5cd;
}

.stack a {
  height: 28px;
  display: flex;
  align-items: center;
  gap: 9px;
  padding: 0 0 2px 5px;
  color: #000;
  font-weight: bold;
  text-decoration: none;
  border-bottom: 1px solid #c3c5cd;
}

.stack a.on { background: #f0ffff; }
.stack svg { width: 22px; height: 22px; }
.left .stack { height: 168px; }
.right .stack { height: 112px; }

/* drawing area */
.center {
  flex: 1;
  min-width: 0;
  display: flex;
  flex-direction: column;
  border: solid #cfd0d4;
  border-width: 0 3px;
}

.work {
  flex: 1;
  min-height: 0;
  display: flex;
  background: #fff;
}

.canvas {
  flex: 1;
  min-width: 0;
  height: 100%;
}

.canvas .dim {
  font: 12px "DejaVu Sans", sans-serif;
  fill: #f00;
}

.callout {
  font: bold 34px "Liberation Sans", sans-serif;
  fill: #fff;
  stroke: #f53d3d;
  stroke-width: 5px;
  stroke-linejoin: round;
  paint-order: stroke;
  filter: drop-shadow(1px 1px 1px #777);
}

.floors {
  height: 17px;
  flex: none;
  display: flex;
  align-items: center;
  background: #fff;
  padding-left: 5px;
}

.floors .i12 { margin: 0 9px 0 8px; }
.upt { border: 3px solid transparent; border-bottom-color: #000; border-top: 0; }
.leftt { border: 4px solid transparent; border-right-color: #000; border-left: 0; }
.rightt { border: 4px solid transparent; border-left-color: #000; border-right: 0; margin-left: auto; }

.floor {
  height: 17px;
  margin-left: 13px;
  padding: 2px 7px 0 0;
  line-height: 13px;
  font-weight: bold;
  color: #00008b;
  border-right: 1px solid #999;
}

.floorbar {
  width: 152px;
  margin-left: 4px;
  border: solid #ccc;
  border-width: 0 2px;
}

.track {
  flex: 1;
  height: 15px;
  background: #fff;
}

.track .thumb {
  display: block;
  width: 21px;
  height: 15px;
  margin-left: 45px;
}

.floors input {
  appearance: none;
  width: 140px;
  height: 3px;
  margin: 0 6px 0 5px;
  background: #e0e0e0;
  border: 1px solid #ccc;
}

.floors input::-webkit-slider-thumb {
  appearance: none;
  width: 11px;
  height: 17px;
  background: #f0f0f0;
  border: 1px solid #aaa;
}

footer {
  height: 20px;
  flex: none;
  display: flex;
  align-items: center;
  gap: 3px;
  padding: 0 4px 0 1px;
}

.layer {
  width: 120px;
  height: 20px;
  margin-left: auto;
}

.sum { margin-right: 6px; }

/* property grid */
.props {
  flex: 1;
  min-height: 0;
  display: flex;
  flex-direction: column;
  background: #fff;
  border: 1px solid #a9adb8;
  border-width: 1px 0;
}

.props h3 {
  flex: none;
  padding: 4px 6px;
  font-weight: bold;
  background: #dcdcdc;
}

.root {
  flex: none;
  height: 18px;
  padding-left: 6px;
  background: #f0f0f0;
}

.tri {
  display: inline-block;
  border: solid transparent;
  border-width: 0 0 6px 6px;
  border-bottom-color: #000;
}

.rows {
  flex: none;
  position: relative;
}

.prow {
  min-height: 21px;
  display: flex;
  margin-right: 1px;
  border-left: 10px solid #f0f0f0;
}

.prow > :first-child {
  width: 150px;
  flex: none;
  padding-left: 32px;
  display: flex;
  align-items: center;
  border-bottom: 1px solid #f0f0f0;
  border-right: 1px solid #f0f0f0;
}

.prow > div {
  flex: 1;
  min-width: 0;
  display: flex;
  align-items: center;
  border-bottom: 1px solid #f0f0f0;
}

.prow.head > :first-child { padding-left: 6px; border-bottom: 0; }
.prow.head .tri { margin: -4px 5px 0 0; }
.prow.pick { height: 25px; }
.prow.mid { height: 22px; }
.prow .ro { padding-left: 2px; color: #777; }
.hot > :first-child { background: #bfe6fd; }

.filter {
  margin-left: 5px;
  border: 5px solid transparent;
  border-top: 8px solid #777;
  border-bottom: 0;
}

.prow .combo {
  flex: 1;
  min-width: 0;
  height: 100%;
}

.pick select {
  padding: 0 18px 0 0;
  font-style: italic;
}

.add {
  width: 16px;
  height: 100%;
  display: flex;
  align-items: center;
  justify-content: center;
  background: #ddd;
  border: 1px solid #888;
}

.prow input {
  width: 100%;
  padding: 0 5px;
  border: 0;
}

.pen > :first-child { background: #c5e5f6; }

.prow .penbox {
  border: 1px solid #2a8fd0;
  background: #bedbe9;
}

.penbox i {
  flex: 1;
  height: 1px;
  margin: 0 0 2px 1px;
  background: #222;
}

.popup {
  position: absolute;
  right: 3px;
  top: 100%;
  width: 193px;
  height: 100px;
  padding: 2px 0 0 3px;
  display: grid;
  grid-template-columns: 58px 1fr;
  grid-template-rows: 28px 28px 22px;
  row-gap: 4px;
  align-items: center;
  background: #fff;
  border: 4px solid #f50f3a;
  border-radius: 4px;
}

.popup .combo { height: 100%; border-right: 0; }
.popup .combo::after { right: 4px; }

.line i {
  width: 100px;
  height: 2px;
  margin-left: 5px;
  background: #777;
}

.line em {
  position: absolute;
  left: 10px;
  font-style: normal;
  color: #00f;
}

.popup .color { background: #fff; }
.popup .color::after { display: none; }

.black {
  width: 20px;
  height: 14px;
  margin: 0 4px;
  background: #000;
}

.color span {
  width: 13px;
  height: 100%;
  margin-left: auto;
  display: flex;
  align-items: center;
  justify-content: center;
  background: #ddd;
  border-left: 1px solid #777;
}

.marks {
  position: absolute;
  right: 97px;
  bottom: -8px;
  width: 130px;
  height: 36px;
}

.desc {
  flex: none;
  height: 45px;
  margin-top: auto;
  padding: 6px 2px;
  font-weight: bold;
  background: #dcdcdc;
  border-top: 2px solid #eee;
}
```
